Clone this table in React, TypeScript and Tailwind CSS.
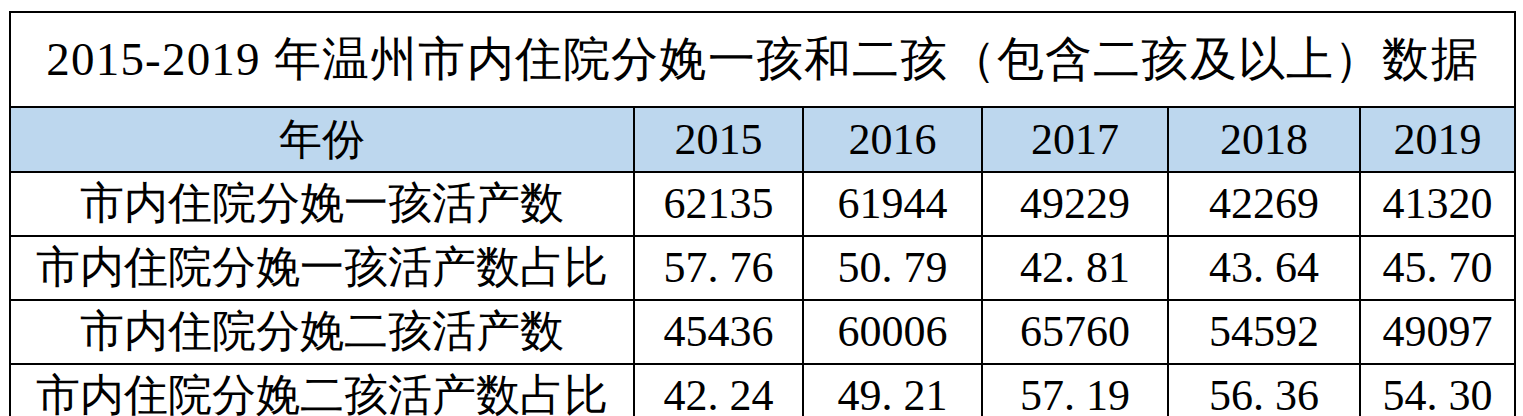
export default function App() {
  const years = ['2015', '2016', '2017', '2018', '2019'];
  const rows = [
    ['市内住院分娩一孩活产数', '62135', '61944', '49229', '42269', '41320'],
    ['市内住院分娩一孩活产数占比', '57. 76', '50. 79', '42. 81', '43. 64', '45. 70'],
    ['市内住院分娩二孩活产数', '45436', '60006', '65760', '54592', '49097'],
    ['市内住院分娩二孩活产数占比', '42. 24', '49. 21', '57. 19', '56. 36', '54. 30'],
  ];
  const widths = [624, 169, 179, 186, 192, 155];
  return (
    <div className="bg-white w-[1523px] h-[416px] overflow-hidden pt-[11px] pl-[9px] font-['Liberation_Serif'] font-light text-black">
      <table className="table-fixed border-collapse w-[1507px]">
        <colgroup>
          {widths.map((w, i) => (
            <col key={i} style={{ width: w }} />
          ))}
        </colgroup>
        <tbody>
          <tr className="h-[95px]">
            <td colSpan={6} className="border-2 border-black text-center align-middle leading-none whitespace-nowrap text-[47px] tracking-[1.2px]">
              2015-2019 年温州市内住院分娩一孩和二孩（包含二孩及以上）数据
            </td>
          </tr>
          <tr className="h-[65px] bg-[#bdd7ee]">
            <td className="border-2 border-black text-center align-middle leading-none whitespace-nowrap text-[43px]">年份</td>
            {years.map((y) => (
              <td key={y} className="border-2 border-black text-center align-middle leading-none whitespace-nowrap text-[44px]">
                {y}
              </td>
            ))}
          </tr>
          {rows.map((r, ri) => (
            <tr key={ri} className="h-[64px]">
              {r.map((c, ci) => (
                <td key={ci} className="border-2 border-black text-center align-middle leading-none whitespace-nowrap text-[44px]">
                  {c}
                </td>
              ))}
            </tr>
          ))}
        </tbody>
      </table>
    </div>
  );
}
